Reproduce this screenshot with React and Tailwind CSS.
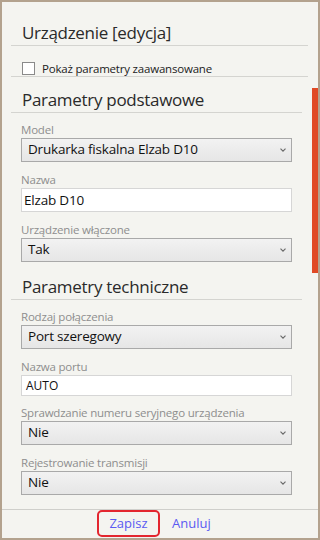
import React from 'react';

const font = { fontFamily: '"Open Sans", "Noto Sans", sans-serif' };

// Chevron for the select boxes
const Chevron = () => (
  <svg width="6" height="4" viewBox="0 0 6 4" className="shrink-0">
    <path d="M0.5 0.6 L3 3.2 L5.5 0.6" fill="none" stroke="#6a6a6a" strokeWidth="1.1" />
  </svg>
);

const Label = ({ children }) => (
  <div className="h-[14px] leading-[14px] text-[11.5px] tracking-[-0.2px] text-[#8e8e8e] mb-[1px] whitespace-nowrap">{children}</div>
);

const Select = ({ value }) => (
  <div className="h-[24px] flex items-center justify-between pl-[6px] pr-[5px] border border-[#a9a9a9] bg-gradient-to-b from-[#f2f2f2] to-[#e6e6e6] text-[13.5px] tracking-[-0.2px] text-[#111]">
    <span className="leading-none">{value}</span>
    <Chevron />
  </div>
);

const Field = ({ label, children, top = 'mt-[11px]' }) => (
  <div className={top}>
    <Label>{label}</Label>
    {children}
  </div>
);

const Section = ({ title, top }) => (
  <div className={`${top} mr-[10px] border-b border-[#d4d4d0] h-[25px] pl-[11px] text-[17px] tracking-[-0.3px] leading-[24px] text-[#2a2a2a]`}>
    {title}
  </div>
);

const App = () => {
  return (
    <div style={font} className="w-[320px] h-[540px] border-2 border-[#b3a28e] bg-[#f4f4f0] flex flex-col overflow-hidden">
      <div className="h-[507px] flex">
        <div className="flex-1 pl-[9px]">
          {/* header */}
          <div className="mt-[19px] mr-[4px] border-b border-[#d4d4d0] h-[25px] pl-[11px] text-[17px] tracking-[-0.3px] leading-[24px] text-[#2a2a2a]">
            Urządzenie [edycja]
          </div>
          <div className="mr-[4px] border-b border-[#d4d4d0] h-[31px] pl-[11px] flex items-end pb-[1px]">
            <div className="flex items-center gap-[7px]">
              <div className="w-[13px] h-[13px] border border-[#8a8a8a] bg-white" />
              <span className="text-[11.5px] tracking-[-0.2px] text-[#222] leading-none">Pokaż parametry zaawansowane</span>
            </div>
          </div>

          <Section title="Parametry podstawowe" top="mt-[11px]" />
          <div className="pl-[10px] mr-[20px]">
            <Field label="Model" top="mt-[10px]">
              <Select value="Drukarka fiskalna Elzab D10" />
            </Field>
            <Field label="Nazwa">
              <div className="h-[24px] flex items-center pl-[2px] border border-[#d6d6d6] bg-white text-[13.5px] tracking-[-0.2px] text-[#111]">
                Elzab D10
              </div>
            </Field>
            <Field label="Urządzenie włączone">
              <Select value="Tak" />
            </Field>
          </div>

          <Section title="Parametry techniczne" top="mt-[13px]" />
          <div className="pl-[10px] mr-[20px]">
            <Field label="Rodzaj połączenia" top="mt-[10px]">
              <Select value="Port szeregowy" />
            </Field>
            <Field label="Nazwa portu">
              <div className="h-[21px] flex items-center pl-[4px] border border-[#d6d6d6] bg-white text-[12px] text-[#111]">
                AUTO
              </div>
            </Field>
            <Field label="Sprawdzanie numeru seryjnego urządzenia" top="mt-[10px]">
              <Select value="Nie" />
            </Field>
            <Field label="Rejestrowanie transmisji">
              <div className="h-[25px] flex flex-col">
                <Select value="Nie" />
              </div>
            </Field>
          </div>
        </div>
        {/* scrollbar */}
        <div className="w-[6px]">
          <div className="mt-[86px] h-[185px] bg-[#e04a26]" />
        </div>
      </div>

      {/* footer */}
      <div className="border-t border-[#cfcfcb] flex-1 flex items-start pl-[95px]">
        <button className="w-[63px] h-[27px] border-2 border-[#e3262f] rounded-[5px] text-[13px] text-[#5a5af2]">
          Zapisz
        </button>
        <button className="ml-[12px] h-[27px] text-[13px] text-[#5a5af2]">Anuluj</button>
      </div>
    </div>
  );
};

export default App;
